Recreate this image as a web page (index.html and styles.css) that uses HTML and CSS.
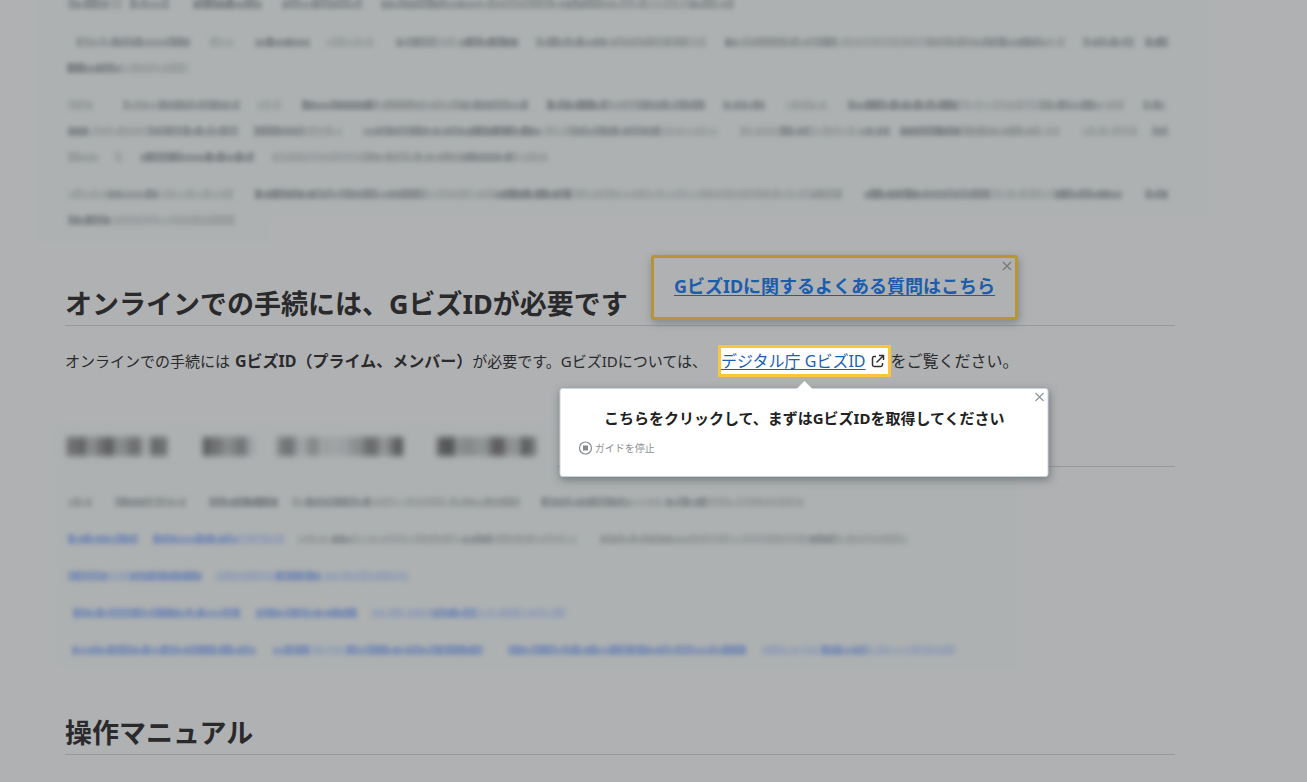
FILE: index.html
```html
<!DOCTYPE html>
<html lang="ja">
<head>
<meta charset="utf-8">
<title>GビズID</title>
<link rel="stylesheet" href="styles.css">
</head>
<body>
<main class="page">
  <div class="veil veil-intro" aria-hidden="true">
    <div class="para"><div class="row row-cut" data-bars="31,40,3 0,14,1 8,39,3 24,69,4 20,80,3 19,95,3 0,90,2 0,30,3 0,50,2 0,44,1 0,20,3 0,24,2"></div></div>
    <div class="para">
      <div class="row" data-bars="39,36,2 0,78,3 20,24,1 21,55,4 16,47,1 23,40,3 0,24,1 0,58,4 18,70,3 0,82,2 0,18,1 19,12,4 0,80,2 0,20,3 0,90,1 0,50,2 0,70,3 0,18,1 18,51,3 11,23,4"></div>
      <div class="row" data-bars="30,53,4 0,68,1"></div>
    </div>
    <div class="para">
      <div class="row" data-bars="31,25,1 30,36,2 0,81,3 17,24,1 21,70,4 0,90,2 0,66,3 19,60,4 0,30,2 0,68,3 18,42,3 21,41,1 21,110,4 0,82,1 0,60,3 0,24,1 19,22,3"></div>
      <div class="row" data-bars="31,20,4 0,60,1 0,90,3 16,50,3 0,39,1 20,100,3 0,77,4 0,30,1 0,90,3 0,58,1 22,40,1 0,30,3 0,50,1 0,30,3 10,60,4 0,80,2 0,20,1 22,55,1 15,16,3"></div>
      <div class="row" data-bars="31,30,2 17,7,1 18,114,4 18,90,1 0,100,2 0,50,3 0,36,1"></div>
    </div>
    <div class="para">
      <div class="row" data-bars="31,40,1 0,50,3 0,75,1 22,60,4 0,110,3 0,70,1 0,76,4 0,110,1 0,50,1 0,80,1 0,31,2 22,60,4 0,66,3 0,65,1 0,67,4 23,23,4"></div>
      <div class="row" data-bars="31,42,4 0,125,1"></div>
    </div>
  </div>

  <section class="section section-gbiz">
    <h2 class="title">オンラインでの手続には、GビズIDが必要です</h2>
    <div class="lead">オンラインでの手続には<strong>GビズID（プライム、メンバー）</strong>が必要です。GビズIDについては、<span class="target"><a class="link" href="#gbiz">デジタル庁 GビズID</a><svg class="external" viewBox="0 0 14 14" aria-hidden="true"><path d="M5 2.5H3.2Q1.5 2.5 1.5 4.200V10.800Q1.500 12.500 3.200 12.500H9.800Q11.500 12.500 11.500 10.800V9M8 1.500H12.500V6M12.300 1.700L5.500 8.500"/></svg><span class="guide" role="dialog" aria-labelledby="guide-title">
        <button class="close" type="button" aria-label="閉じる"><svg viewBox="0 0 10 10"><path d="M1 1L9 9M9 1L1 9"/></svg></button>
        <strong class="guide-title" id="guide-title">こちらをクリックして、まずはGビズIDを取得してください</strong>
        <button class="stop" type="button"><svg viewBox="0 0 14 14" aria-hidden="true"><circle cx="7" cy="7" r="6"/><rect x="4.500" y="4.500" width="5" height="5"/></svg>ガイドを停止</button>
      </span></span><span class="tail">をご覧ください。</span></div>
    <aside class="faq">
      <button class="close" type="button" aria-label="閉じる"><svg viewBox="0 0 10 10"><path d="M1 1L9 9M9 1L1 9"/></svg></button>
      <a class="faq-link" href="#faq">GビズIDに関するよくある質問はこちら</a>
    </aside>
  </section>

  <section class="section section-veiled" aria-hidden="true">
    <div class="veiled-title"><div class="row row-title" data-bars="10,18,4 0,12,2 0,16,4 0,14,2 0,14,3 0,10,1 0,16,4 36,18,4 0,12,2 0,14,3 0,8,1 22,18,3 0,12,1 0,12,2 0,30,1 0,14,2 0,16,4 0,10,2 0,14,4 34,18,4 0,36,2 0,14,4 0,16,2 0,15,4"></div></div>
    <div class="veil veil-body">
      <div class="row" data-bars="11,24,2 23,30,3 0,41,2 23,69,4 14,14,2 0,64,3 0,80,1 0,70,2 21,90,3 0,35,1 0,40,3 0,50,1 0,48,1"></div>
      <div class="row" data-bars="11,70,b 15,85,b 0,46,c 13,35,1 0,20,3 0,110,1 0,30,3 0,85,1 23,90,2 0,70,1 0,50,1 0,25,3 0,73,1"></div>
      <div class="row" data-bars="11,39,b 0,23,c 0,72,b 14,60,c 0,44,b 0,88,c"></div>
      <div class="row" data-bars="16,167,b 16,101,b 15,60,c 0,44,b 0,89,c"></div>
      <div class="row" data-bars="15,184,b 17,36,b 0,38,c 0,136,b 25,238,b 16,60,c 0,44,b 0,89,c"></div>
    </div>
  </section>

  <section class="section section-manual">
    <h2 class="title">操作マニュアル</h2>
  </section>
</main>
<script src="bars.js"></script>
</body>
</html>
```
FILE: bars.js
```js
// Each bar is "gap,width,tone"; it is filled with short cells of uneven strength.
let seed = 17;
const nextShade = () => {
  seed = (seed * 16807) % 2147483647;
  return Math.floor(seed / 97) % 4;
};

document.querySelectorAll('[data-bars]').forEach((row) => {
  row.dataset.bars.split(' ').forEach((item) => {
    const [gap, width, tone] = item.split(',');
    const bar = document.createElement('span');
    bar.className = 'bar tone-' + tone;
    bar.style.width = width + 'px';
    bar.style.marginLeft = gap + 'px';
    const cells = Math.max(1, Math.round(width / 6));
    for (let i = 0; i < cells; i += 1) {
      const cell = document.createElement('span');
      cell.className = 'cell shade-' + nextShade();
      bar.append(cell);
    }
    row.append(bar);
  });
});
```
FILE: styles.css
```css
* { box-sizing: border-box; }

body {
  margin: 0;
  background: #b0b1b3;
  color: #2a2a2d;
  font-family: "Noto Sans", "Noto Sans CJK JP", sans-serif;
  font-size: 15px;
  line-height: 26px;
}

.page { padding: 0 99px 0 37px; }

.section { position: relative; padding: 0 33px 0 28px; }

.title {
  margin: 0;
  border-bottom: 1px solid #97989c;
  font-size: 27px;
  font-weight: 700;
  line-height: 42px;
}

/* obscured copy */
.veil { display: flex; flex-direction: column; gap: 11px; }

.veil-intro {
  padding-bottom: 10px;
  background:
    linear-gradient(#adb1b2, #adb1b2) 0 0 / 100% 217px no-repeat,
    linear-gradient(#adb1b2, #adb1b2) 0 0 / 233px 100% no-repeat;
}

.row { display: flex; align-items: center; height: 26px; filter: blur(2px); }
.row-cut { height: 18px; padding-bottom: 12px; }
.row-cut .bar { height: 12px; }
.bar { display: flex; flex: none; height: 10px; }
.cell { flex: 1; background: currentColor; }
.shade-0 { opacity: 1; }
.shade-1 { opacity: 0.8; }
.shade-2 { opacity: 0.9; height: 9px; align-self: flex-end; }
.shade-3 { opacity: 0.7; height: 8px; align-self: flex-end; }
.tone-1 { color: #9b9fa0; }
.tone-2 { color: #939798; }
.tone-3 { color: #8a8e90; }
.tone-4 { color: #828688; }
.tone-b { color: #7f90b3; }
.tone-c { color: #98a2b4; }

.section-veiled { margin-top: 51px; padding-left: 20px; }
.veiled-title { display: flex; align-items: flex-end; }
.veiled-title::after { content: ""; flex: 1; height: 1px; background: #97989c; }
.row-title { width: 500px; height: 42px; background: #adb1b2; filter: blur(3px); }
.row-title .bar { height: 19px; }
.row-title .tone-4 { color: #565759; }
.row-title .tone-3 { color: #6c6d6f; }
.row-title .tone-2 { color: #86898a; }
.row-title .cell { height: 100%; }
.veil-body { width: 960px; max-width: 100%; padding: 22px 0 5px; background: #adb1b2; }

/* GbizID section */
.section-gbiz { margin-top: 40px; }
.lead { margin-top: 22px; }
.lead > strong { margin-left: 5px; font-size: 16px; }
.tail { font-size: 16px; }

.target {
  position: relative;
  margin-left: 11px;
  padding: 2px 3px 2px 0;
  border: 3px solid #fcc53c;
  background: #fff;
  font-size: 16px;
  white-space: nowrap;
}
.link { color: #1a5fb4; text-decoration: underline; text-underline-offset: 2px; }
.external {
  width: 14px;
  height: 14px;
  margin-left: 5px;
  vertical-align: -1px;
  fill: none;
  stroke: #333;
  stroke-width: 1.5;
}

.close {
  position: absolute;
  top: 3px;
  right: 3px;
  display: flex;
  padding: 0;
  border: 0;
  background: none;
}
.close svg { width: 10px; height: 10px; fill: none; stroke: #8e979c; stroke-width: 1.2; }

.guide {
  position: absolute;
  z-index: 2;
  top: calc(100% + 14px);
  left: 50%;
  display: flex;
  flex-direction: column;
  align-items: center;
  gap: 9px;
  width: 489px;
  height: 89px;
  padding: 16px 18px;
  transform: translateX(-50%);
  border: 1px solid #c8d4dc;
  border-radius: 3px;
  background: #fff;
  box-shadow: 1px 3px 8px rgba(60, 72, 76, 0.5);
}
.guide::before {
  content: "";
  position: absolute;
  bottom: 100%;
  left: 50%;
  margin-left: -8px;
  border: 8px solid transparent;
  border-top: 0;
  border-bottom-color: #fff;
}
.guide-title { color: #222; font-size: 15px; }
.stop {
  display: flex;
  align-self: flex-start;
  align-items: center;
  gap: 2px;
  padding: 0;
  border: 0;
  background: none;
  color: #8a9296;
  font-family: inherit;
  font-size: 10px;
  line-height: 16px;
}
.stop svg { width: 14px; height: 14px; fill: none; stroke: #858c90; stroke-width: 1.2; }
.stop rect { fill: #858c90; stroke: none; }

.faq {
  position: absolute;
  top: -28px;
  left: 614px;
  width: 367px;
  height: 65px;
  padding: 15px 18px;
  border: 3px solid #b5943a;
  border-radius: 3px;
  background: #b0b1b3;
  box-shadow: 1px 3px 9px rgba(70, 82, 86, 0.45);
  text-align: center;
}
.faq .close svg { stroke: #73777a; }
.faq-link { color: #1c5dab; font-size: 18px; font-weight: 700; white-space: nowrap; text-underline-offset: 2px; }

.section-manual { margin-top: 44px; padding-bottom: 27px; }
```
